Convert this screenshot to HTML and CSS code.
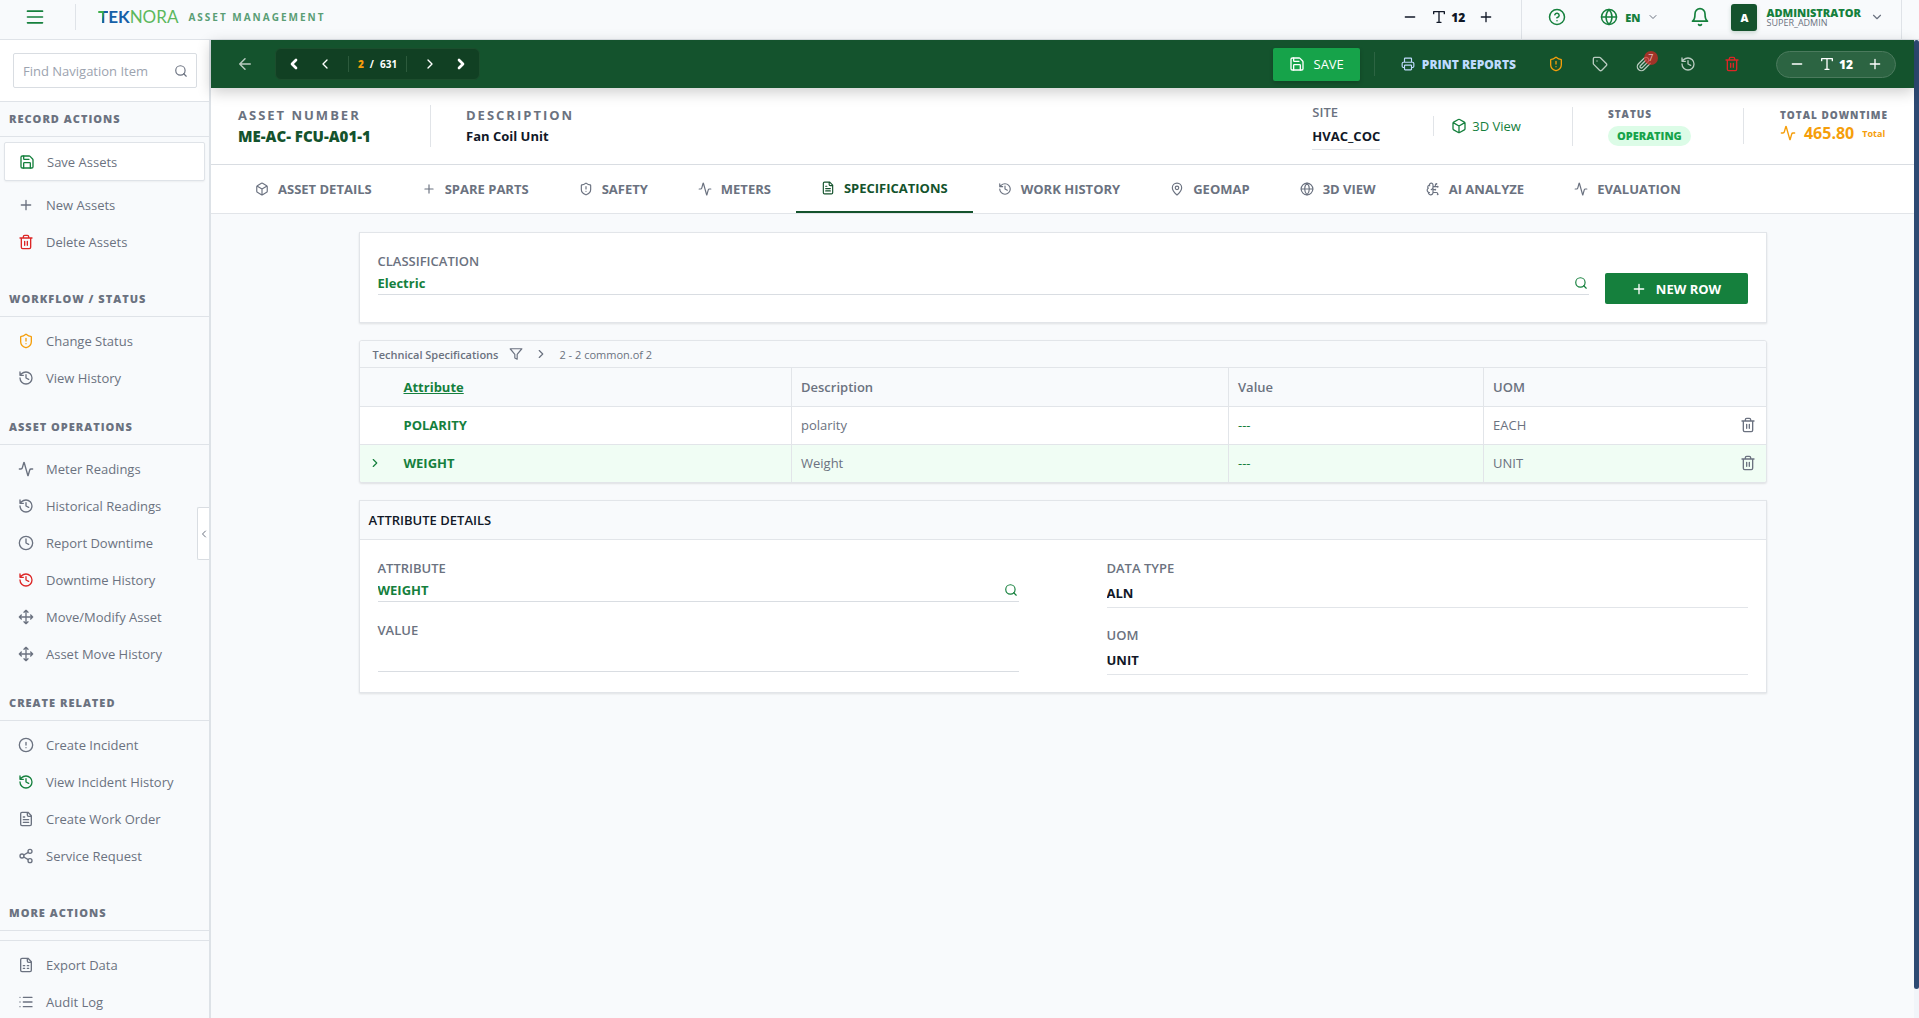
FILE: index.html
```
<!DOCTYPE html>
<html lang="en">
<head>
  <meta charset="UTF-8">
  <title>Teknora Asset Management</title>
  <link rel="stylesheet" href="styles.css">
</head>
<body>
  <!-- Icon sprite -->
  <svg class="sprite" aria-hidden="true">
    <symbol id="i-menu" viewBox="0 0 24 24"><path d="M3 5h18M3 12h18M3 19h18"/></symbol>
    <symbol id="i-minus" viewBox="0 0 24 24"><path d="M5 12h14"/></symbol>
    <symbol id="i-plus" viewBox="0 0 24 24"><path d="M5 12h14M12 5v14"/></symbol>
    <symbol id="i-type" viewBox="0 0 24 24"><path d="M4 7V4h16v3M9 20h6M12 4v16"/></symbol>
    <symbol id="i-help" viewBox="0 0 24 24"><circle cx="12" cy="12" r="10"/><path d="M9.1 9a3 3 0 0 1 5.8 1c0 2-3 3-3 3M12 17h.01"/></symbol>
    <symbol id="i-globe" viewBox="0 0 24 24"><circle cx="12" cy="12" r="10"/><path d="M12 2a14.5 14.5 0 0 0 0 20 14.5 14.5 0 0 0 0-20M2 12h20"/></symbol>
    <symbol id="i-bell" viewBox="0 0 24 24"><path d="M6 8a6 6 0 0 1 12 0c0 7 3 9 3 9H3s3-2 3-9M10.3 21a1.94 1.94 0 0 0 3.4 0"/></symbol>
    <symbol id="i-down" viewBox="0 0 24 24"><path d="m6 9 6 6 6-6"/></symbol>
    <symbol id="i-left" viewBox="0 0 24 24"><path d="m15 18-6-6 6-6"/></symbol>
    <symbol id="i-right" viewBox="0 0 24 24"><path d="m9 18 6-6-6-6"/></symbol>
    <symbol id="i-back" viewBox="0 0 24 24"><path d="m12 19-7-7 7-7M19 12H5"/></symbol>
    <symbol id="i-search" viewBox="0 0 24 24"><circle cx="11" cy="11" r="8"/><path d="m21 21-4.3-4.3"/></symbol>
    <symbol id="i-save" viewBox="0 0 24 24"><path d="M15.2 3a2 2 0 0 1 1.4.6l3.8 3.8a2 2 0 0 1 .6 1.4V19a2 2 0 0 1-2 2H5a2 2 0 0 1-2-2V5a2 2 0 0 1 2-2z"/><path d="M17 21v-7a1 1 0 0 0-1-1H8a1 1 0 0 0-1 1v7M7 3v4a1 1 0 0 0 1 1h7"/></symbol>
    <symbol id="i-trash" viewBox="0 0 24 24"><path d="M3 6h18M19 6v14a2 2 0 0 1-2 2H7a2 2 0 0 1-2-2V6M8 6V4a2 2 0 0 1 2-2h4a2 2 0 0 1 2 2v2M10 11v6M14 11v6"/></symbol>
    <symbol id="i-shield" viewBox="0 0 24 24"><path d="M20 13c0 5-3.5 7.5-7.66 8.95a1 1 0 0 1-.67-.01C7.5 20.5 4 18 4 13V6a1 1 0 0 1 1-1c2 0 4.5-1.2 6.24-2.72a1.17 1.17 0 0 1 1.52 0C14.51 3.81 17 5 19 5a1 1 0 0 1 1 1zM12 8v4M12 16h.01"/></symbol>
    <symbol id="i-history" viewBox="0 0 24 24"><path d="M3 12a9 9 0 1 0 9-9 9.75 9.75 0 0 0-6.74 2.74L3 8M3 3v5h5M12 7v5l4 2"/></symbol>
    <symbol id="i-activity" viewBox="0 0 24 24"><path d="M22 12h-2.48a2 2 0 0 0-1.93 1.46l-2.35 8.36a.25.25 0 0 1-.48 0L9.24 2.18a.25.25 0 0 0-.48 0l-2.35 8.36A2 2 0 0 1 4.49 12H2"/></symbol>
    <symbol id="i-clock" viewBox="0 0 24 24"><circle cx="12" cy="12" r="10"/><path d="M12 6v6l4 2"/></symbol>
    <symbol id="i-move" viewBox="0 0 24 24"><path d="M12 2v20M2 12h20M15 19l-3 3-3-3M19 9l3 3-3 3M5 9l-3 3 3 3M9 5l3-3 3 3"/></symbol>
    <symbol id="i-alert" viewBox="0 0 24 24"><circle cx="12" cy="12" r="10"/><path d="M12 8v4M12 16h.01"/></symbol>
    <symbol id="i-file" viewBox="0 0 24 24"><path d="M15 2H6a2 2 0 0 0-2 2v16a2 2 0 0 0 2 2h12a2 2 0 0 0 2-2V7zM14 2v4a2 2 0 0 0 2 2h4M10 9H8M16 13H8M16 17H8"/></symbol>
    <symbol id="i-sheet" viewBox="0 0 24 24"><path d="M15 2H6a2 2 0 0 0-2 2v16a2 2 0 0 0 2 2h12a2 2 0 0 0 2-2V7zM14 2v4a2 2 0 0 0 2 2h4M8 13h2M14 13h2M8 17h2M14 17h2"/></symbol>
    <symbol id="i-share" viewBox="0 0 24 24"><circle cx="18" cy="5" r="3"/><circle cx="6" cy="12" r="3"/><circle cx="18" cy="19" r="3"/><path d="m8.59 13.51 6.83 3.98M15.41 6.51l-6.82 3.98"/></symbol>
    <symbol id="i-list" viewBox="0 0 24 24"><path d="M3 5h.01M3 12h.01M3 19h.01M8 5h13M8 12h13M8 19h13"/></symbol>
    <symbol id="i-printer" viewBox="0 0 24 24"><path d="M6 18H4a2 2 0 0 1-2-2v-5a2 2 0 0 1 2-2h16a2 2 0 0 1 2 2v5a2 2 0 0 1-2 2h-2M6 9V3a1 1 0 0 1 1-1h10a1 1 0 0 1 1 1v6"/><rect x="6" y="14" width="12" height="8" rx="1"/></symbol>
    <symbol id="i-tag" viewBox="0 0 24 24"><path d="M12.59 2.59A2 2 0 0 0 11.17 2H4a2 2 0 0 0-2 2v7.17a2 2 0 0 0 .59 1.42l8.7 8.7a2.43 2.43 0 0 0 3.42 0l6.58-6.58a2.43 2.43 0 0 0 0-3.42zM7.5 7.5h.01"/></symbol>
    <symbol id="i-clip" viewBox="0 0 24 24"><path d="m21.44 11.05-9.19 9.19a6 6 0 0 1-8.49-8.49l8.57-8.57A4 4 0 1 1 18 8.84l-8.59 8.57a2 2 0 0 1-2.83-2.83l8.49-8.48"/></symbol>
    <symbol id="i-box" viewBox="0 0 24 24"><path d="M21 8a2 2 0 0 0-1-1.73l-7-4a2 2 0 0 0-2 0l-7 4A2 2 0 0 0 3 8v8a2 2 0 0 0 1 1.73l7 4a2 2 0 0 0 2 0l7-4A2 2 0 0 0 21 16zM3.3 7l8.7 5 8.7-5M12 22V12"/></symbol>
    <symbol id="i-pin" viewBox="0 0 24 24"><path d="M20 10c0 4.99-5.54 10.19-7.4 11.8a1 1 0 0 1-1.2 0C9.54 20.19 4 14.99 4 10a8 8 0 0 1 16 0"/><circle cx="12" cy="10" r="3"/></symbol>
    <symbol id="i-brain" viewBox="0 0 24 24"><path d="M12 5a3 3 0 1 0-5.997.125 4 4 0 0 0-2.526 5.77 4 4 0 0 0 .556 6.588A4 4 0 1 0 12 18zM9 13a4.5 4.5 0 0 0 3-4M6 5.13a3 3 0 0 0 .4 1.38M3.48 10.9a4 4 0 0 1 .58-.4M6 18a4 4 0 0 1-1.97-.52M12 13h4M12 18h6a2 2 0 0 1 2 2v1M12 8h8M16 8V5a2 2 0 0 1 2-2"/><circle cx="16" cy="13" r=".5"/><circle cx="18" cy="3" r=".5"/><circle cx="20" cy="21" r=".5"/><circle cx="20" cy="8" r=".5"/></symbol>
    <symbol id="i-filter" viewBox="0 0 24 24"><path d="M22 3H2l8 9.46V19l4 2v-8.54z"/></symbol>
  </svg>

  <header class="topbar">
    <button class="icon-btn menu-btn" aria-label="Menu"><svg class="icon"><use href="#i-menu"/></svg></button>
    <div class="brand">
      <span class="logo"><span class="logo-a"><span class="logo-leaf">T</span>EK</span><span class="logo-b">NORA</span></span>
      <span class="brand-sub">ASSET MANAGEMENT</span>
    </div>
    <div class="type-size">
      <button class="icon-btn" aria-label="Smaller text"><svg class="icon"><use href="#i-minus"/></svg></button>
      <span class="type-value"><svg class="icon"><use href="#i-type"/></svg>12</span>
      <button class="icon-btn" aria-label="Larger text"><svg class="icon"><use href="#i-plus"/></svg></button>
    </div>
    <div class="account">
      <button class="icon-btn" aria-label="Help"><svg class="icon lg"><use href="#i-help"/></svg></button>
      <button class="icon-btn lang"><svg class="icon lg"><use href="#i-globe"/></svg>EN<svg class="icon xs muted"><use href="#i-down"/></svg></button>
      <button class="icon-btn" aria-label="Notifications"><svg class="icon xl"><use href="#i-bell"/></svg></button>
      <button class="icon-btn user">
        <span class="avatar">A</span>
        <span class="user-text"><span class="user-name">ADMINISTRATOR</span><span class="user-role">SUPER_ADMIN</span></span>
        <svg class="icon sm muted"><use href="#i-down"/></svg>
      </button>
    </div>
  </header>

  <div class="shell">
    <aside class="sidebar">
      <div class="nav-search">
        <label class="search-box">
          <input type="text" placeholder="Find Navigation Item" aria-label="Find Navigation Item">
          <svg class="icon sm"><use href="#i-search"/></svg>
        </label>
      </div>
      <nav>
        <h2 class="nav-title">RECORD ACTIONS</h2>
        <div class="nav-group wide">
          <button class="nav-item active"><svg class="icon green"><use href="#i-save"/></svg>Save Assets</button>
          <button class="nav-item"><svg class="icon"><use href="#i-plus"/></svg>New Assets</button>
          <button class="nav-item"><svg class="icon red"><use href="#i-trash"/></svg>Delete Assets</button>
        </div>
        <h2 class="nav-title">WORKFLOW / STATUS</h2>
        <div class="nav-group">
          <button class="nav-item"><svg class="icon amber"><use href="#i-shield"/></svg>Change Status</button>
          <button class="nav-item"><svg class="icon"><use href="#i-history"/></svg>View History</button>
        </div>
        <h2 class="nav-title">ASSET OPERATIONS</h2>
        <div class="nav-group">
          <button class="nav-item"><svg class="icon"><use href="#i-activity"/></svg>Meter Readings</button>
          <button class="nav-item"><svg class="icon"><use href="#i-history"/></svg>Historical Readings</button>
          <button class="nav-item"><svg class="icon"><use href="#i-clock"/></svg>Report Downtime</button>
          <button class="nav-item"><svg class="icon red"><use href="#i-history"/></svg>Downtime History</button>
          <button class="nav-item"><svg class="icon"><use href="#i-move"/></svg>Move/Modify Asset</button>
          <button class="nav-item"><svg class="icon"><use href="#i-move"/></svg>Asset Move History</button>
        </div>
        <h2 class="nav-title">CREATE RELATED</h2>
        <div class="nav-group wide">
          <button class="nav-item"><svg class="icon"><use href="#i-alert"/></svg>Create Incident</button>
          <button class="nav-item"><svg class="icon green"><use href="#i-history"/></svg>View Incident History</button>
          <button class="nav-item"><svg class="icon"><use href="#i-file"/></svg>Create Work Order</button>
          <button class="nav-item"><svg class="icon"><use href="#i-share"/></svg>Service Request</button>
        </div>
        <h2 class="nav-title">MORE ACTIONS</h2>
        <div class="nav-group more">
          <button class="nav-item"><svg class="icon"><use href="#i-sheet"/></svg>Export Data</button>
          <button class="nav-item"><svg class="icon"><use href="#i-list"/></svg>Audit Log</button>
        </div>
      </nav>
      <button class="collapse-btn" aria-label="Collapse sidebar"><svg class="icon xs"><use href="#i-left"/></svg></button>
    </aside>

    <main class="main">
      <div class="toolbar">
        <button class="icon-btn soft" aria-label="Back"><svg class="icon lg"><use href="#i-back"/></svg></button>
        <div class="pager">
          <button class="icon-btn" aria-label="First"><svg class="icon bold"><use href="#i-left"/></svg></button>
          <button class="icon-btn" aria-label="Previous"><svg class="icon"><use href="#i-left"/></svg></button>
          <span class="pager-count"><b>2</b><span>/</span><span>631</span></span>
          <button class="icon-btn" aria-label="Next"><svg class="icon"><use href="#i-right"/></svg></button>
          <button class="icon-btn" aria-label="Last"><svg class="icon bold"><use href="#i-right"/></svg></button>
        </div>
        <button class="save-btn"><svg class="icon"><use href="#i-save"/></svg>SAVE</button>
        <button class="icon-btn print-btn"><svg class="icon sm"><use href="#i-printer"/></svg>PRINT REPORTS</button>
        <div class="tools">
          <button class="icon-btn amber" aria-label="Change status"><svg class="icon"><use href="#i-shield"/></svg></button>
          <button class="icon-btn soft" aria-label="Tag"><svg class="icon"><use href="#i-tag"/></svg></button>
          <button class="icon-btn soft attach" aria-label="Attachments"><svg class="icon"><use href="#i-clip"/></svg><span class="badge">7</span></button>
          <button class="icon-btn soft" aria-label="History"><svg class="icon"><use href="#i-history"/></svg></button>
          <button class="icon-btn red" aria-label="Delete"><svg class="icon"><use href="#i-trash"/></svg></button>
        </div>
        <div class="type-pill">
          <button class="icon-btn" aria-label="Smaller text"><svg class="icon"><use href="#i-minus"/></svg></button>
          <span class="type-value"><svg class="icon"><use href="#i-type"/></svg>12</span>
          <button class="icon-btn" aria-label="Larger text"><svg class="icon"><use href="#i-plus"/></svg></button>
        </div>
      </div>

      <section class="summary">
        <div class="sum-cell number"><span class="sum-label">ASSET NUMBER</span><span class="asset-no">ME-AC- FCU-A01-1</span></div>
        <div class="sum-cell desc"><span class="sum-label">DESCRIPTION</span><span class="asset-desc">Fan Coil Unit</span></div>
        <div class="sum-cell site"><span class="site-label">SITE</span><span class="site-value">HVAC_COC</span></div>
        <button class="icon-btn view3d"><svg class="icon"><use href="#i-box"/></svg>3D View</button>
        <div class="sum-cell status"><span class="tiny-label">STATUS</span><span class="status-pill">OPERATING</span></div>
        <div class="sum-cell downtime"><span class="tiny-label">TOTAL DOWNTIME</span>
          <span class="down-value"><svg class="icon"><use href="#i-activity"/></svg><b>465.80</b><small>Total</small></span></div>
      </section>

      <nav class="tabs">
        <a class="tab" href="#"><svg class="icon sm"><use href="#i-box"/></svg>ASSET DETAILS</a>
        <a class="tab" href="#"><svg class="icon sm"><use href="#i-plus"/></svg>SPARE PARTS</a>
        <a class="tab" href="#"><svg class="icon sm"><use href="#i-shield"/></svg>SAFETY</a>
        <a class="tab" href="#"><svg class="icon sm"><use href="#i-activity"/></svg>METERS</a>
        <a class="tab active" href="#"><svg class="icon sm"><use href="#i-file"/></svg>SPECIFICATIONS</a>
        <a class="tab" href="#"><svg class="icon sm"><use href="#i-history"/></svg>WORK HISTORY</a>
        <a class="tab" href="#"><svg class="icon sm"><use href="#i-pin"/></svg>GEOMAP</a>
        <a class="tab" href="#"><svg class="icon sm"><use href="#i-globe"/></svg>3D VIEW</a>
        <a class="tab" href="#"><svg class="icon sm"><use href="#i-brain"/></svg>AI ANALYZE</a>
        <a class="tab" href="#"><svg class="icon sm"><use href="#i-activity"/></svg>EVALUATION</a>
      </nav>

      <div class="content">
        <section class="card classification">
          <div class="field lookup">
            <label for="classification">CLASSIFICATION</label>
            <div class="input-row"><input id="classification" type="text" value="Electric"><svg class="icon sm"><use href="#i-search"/></svg></div>
          </div>
          <button class="new-row"><svg class="icon"><use href="#i-plus"/></svg>NEW ROW</button>
        </section>

        <section class="card specs">
          <div class="specs-bar">
            <h3>Technical Specifications</h3>
            <svg class="icon sm"><use href="#i-filter"/></svg>
            <svg class="icon sm"><use href="#i-right"/></svg>
            <span>2 - 2 common.of 2</span>
          </div>
          <table>
            <colgroup><col class="c-arrow"><col class="c-attr"><col class="c-desc"><col class="c-value"><col class="c-uom"><col class="c-del"></colgroup>
            <thead>
              <tr><th></th><th class="ruled"><a href="#">Attribute</a></th><th class="ruled">Description</th><th class="ruled">Value</th><th>UOM</th><th></th></tr>
            </thead>
            <tbody>
              <tr><td></td><td class="ruled key">POLARITY</td><td class="ruled">polarity</td><td class="ruled val">---</td><td>EACH</td><td class="del"><button class="icon-btn" aria-label="Delete POLARITY"><svg class="icon"><use href="#i-trash"/></svg></button></td></tr>
              <tr class="selected"><td class="arrow"><svg class="icon sm green"><use href="#i-right"/></svg></td><td class="ruled key">WEIGHT</td><td class="ruled">Weight</td><td class="ruled val">---</td><td>UNIT</td><td class="del"><button class="icon-btn" aria-label="Delete WEIGHT"><svg class="icon"><use href="#i-trash"/></svg></button></td></tr>
            </tbody>
          </table>
        </section>

        <section class="card details">
          <h3 class="details-title">ATTRIBUTE DETAILS</h3>
          <div class="details-grid">
            <div class="col">
              <div class="field lookup">
                <label for="attribute">ATTRIBUTE</label>
                <div class="input-row"><input id="attribute" type="text" value="WEIGHT"><svg class="icon sm"><use href="#i-search"/></svg></div>
              </div>
              <div class="field value">
                <label for="value">VALUE</label>
                <input id="value" type="text">
              </div>
            </div>
            <div class="col">
              <div class="field readonly"><label for="datatype">DATA TYPE</label><input id="datatype" type="text" value="ALN" readonly></div>
              <div class="field readonly"><label for="uom">UOM</label><input id="uom" type="text" value="UNIT" readonly></div>
            </div>
          </div>
        </section>
      </div>
    </main>
    <div class="scroll-track"><div class="scroll-thumb"></div></div>
  </div>
</body>
</html>
```
FILE: styles.css
```
* {
  box-sizing: border-box;
}
body {
  margin: 0;
  height: 100vh;
  display: flex;
  flex-direction: column;
  overflow: hidden;
  font-family: "Open Sans", "Noto Sans", sans-serif;
  font-size: 13px;
  color: #6b7280;
  background: #f8fafc;
}
button, input {
  font: inherit;
  color: inherit;
}
h2, h3 {
  margin: 0;
}
.sprite {
  display: none;
}
.icon {
  width: 16px;
  height: 16px;
  flex: none;
  fill: none;
  stroke: currentColor;
  stroke-width: 2;
  stroke-linecap: round;
  stroke-linejoin: round;
}
.icon.xs { width: 12px; height: 12px; }
.icon.sm { width: 14px; height: 14px; }
.icon.lg { width: 18px; height: 18px; }
.icon.xl { width: 20px; height: 20px; }
.icon.bold { stroke-width: 4; }
.green { color: #15803d; }
.red { color: #dc2626; }
.amber { color: #f59e0b; }
.icon.muted { color: #6b7280; }
.icon-btn {
  display: flex;
  align-items: center;
  padding: 0;
  border: none;
  background: none;
  cursor: pointer;
}

/* top bar */
.topbar {
  display: flex;
  align-items: center;
  height: 40px;
  flex: none;
  padding: 0 17px 5px 25px;
  border-bottom: 1px solid #dfe3e8;
}
.menu-btn {
  color: #15803d;
}
.menu-btn .icon {
  width: 20px;
  height: 20px;
}
.brand {
  display: flex;
  align-items: center;
  gap: 10px;
  height: 26px;
  margin-left: 30px;
  padding-left: 22px;
  border-left: 1px solid #dfe3e8;
}
.logo {
  font-family: "Lato", sans-serif;
  font-size: 17px;
  line-height: 20px;
}
.logo-a { color: #1560a8; font-weight: bold; }
.logo-leaf {
  background: linear-gradient(100deg, #3fae49 45%, #1560a8 55%);
  background-clip: text;
  color: transparent;
}
.logo-b { color: #5cb85c; }
.brand-sub {
  font-size: 10px;
  font-weight: 700;
  letter-spacing: 2px;
  color: #5a9e75;
}
.type-size {
  display: flex;
  gap: 13px;
  margin-left: auto;
  margin-right: 27px;
  color: #111827;
}
.type-value {
  display: flex;
  align-items: center;
  gap: 4px;
  font-size: 12px;
  font-weight: 800;
}
.account {
  display: flex;
  align-items: center;
  align-self: stretch;
  margin-bottom: -5px;
  padding: 0 17px 5px 26px;
  border-left: 1px solid #dfe3e8;
  border-right: 1px solid #dfe3e8;
  color: #15803d;
}
.lang {
  gap: 7px;
  margin: 0 31px 0 34px;
  font-size: 11px;
  font-weight: 800;
}
.user {
  gap: 9px;
  margin-left: 21px;
  text-align: left;
}
.avatar {
  width: 26px;
  height: 27px;
  border-radius: 3px;
  background: #14532d;
  color: #fff;
  font-size: 11px;
  font-weight: 800;
  line-height: 27px;
  text-align: center;
  box-shadow: 0 2px 4px #14532d33;
}
.user-text {
  display: flex;
  flex-direction: column;
}
.user-name { font-size: 11px; font-weight: 800; line-height: 11px; }
.user-role { font-size: 9px; font-weight: 500; line-height: 10px; color: #6b7280; }

.shell {
  display: flex;
  flex: 1;
  min-height: 0;
}

/* sidebar */
.sidebar {
  position: relative;
  width: 211px;
  flex: none;
  overflow: hidden;
  border-right: 2px solid #dde2e7;
}
.nav-search {
  padding: 13px 12px 13px 13px;
  background: #fff;
  border-bottom: 1px solid #dfe3e8;
}
.search-box {
  display: flex;
  align-items: center;
  height: 35px;
  padding: 0 8px 0 9px;
  border: 1px solid #d9dde2;
  border-radius: 2px;
}
.search-box input {
  width: 100%;
  min-width: 0;
  padding: 0;
  border: none;
  outline: none;
}
.search-box input::placeholder {
  color: #9ca3af;
}
.nav-title {
  height: 35px;
  padding: 0 9px;
  border-bottom: 1px solid #dfe3e8;
  font-size: 11px;
  font-weight: 800;
  line-height: 34px;
  letter-spacing: 1px;
}
.nav-group {
  padding: 5px 4px 14px;
}
.nav-group.wide {
  padding-bottom: 22px;
}
.nav-item {
  display: flex;
  align-items: center;
  gap: 12px;
  width: 100%;
  height: 37px;
  padding: 0 14px;
  border: none;
  background: none;
  font-weight: 500;
}
.nav-item.active {
  height: 39px;
  margin-bottom: 5px;
  border: 1px solid #dfe3e8;
  border-radius: 2px;
  background: #fff;
  box-shadow: 0 1px 2px #0000000d;
}
.nav-group.more {
  margin-top: 9px;
  border-top: 1px solid #dfe3e8;
}
.collapse-btn {
  position: absolute;
  right: 0;
  top: 467px;
  width: 12px;
  height: 53px;
  display: flex;
  align-items: center;
  justify-content: center;
  padding: 0;
  border: 1px solid #d9dde2;
  border-right: none;
  border-radius: 2px 0 0 2px;
  background: #fff;
}

/* record toolbar */
.main {
  flex: 1;
  min-width: 0;
  display: flex;
  flex-direction: column;
}
.toolbar {
  position: relative;
  display: flex;
  align-items: center;
  height: 48px;
  flex: none;
  padding: 0 18px 0 25px;
  background: #14532d;
  color: #fff;
  box-shadow: 0 4px 14px #00000033;
}
.soft { color: #b9cbc0; }
.toolbar .red { color: #dc2626; }
.pager {
  display: flex;
  align-items: center;
  gap: 15px;
  height: 32px;
  margin-left: 21px;
  padding: 0 10px;
  border: 1px solid #1c4d2d;
  border-radius: 6px;
  background: #114023;
}
.pager-count {
  display: flex;
  gap: 6px;
  padding: 0 9px;
  border: solid #2c5a3c;
  border-width: 0 1px;
  font-size: 10px;
  font-weight: 700;
  line-height: 16px;
}
.pager-count b { color: #f59e0b; }
.save-btn {
  display: flex;
  align-items: center;
  gap: 9px;
  height: 33px;
  margin-left: auto;
  padding: 0 16px;
  border: none;
  border-radius: 2px;
  background: #16a34a;
  box-shadow: 0 2px 4px #00000033;
}
.print-btn {
  gap: 7px;
  height: 24px;
  margin-left: 14px;
  padding-left: 26px;
  border-left: 1px solid #2c6442;
  color: #bfdbfe;
  font-size: 12px;
  font-weight: 800;
}
.tools {
  display: flex;
  gap: 28px;
  margin: 0 36px 0 32px;
}
.attach {
  position: relative;
}
.badge {
  position: absolute;
  top: -5px;
  right: -6px;
  width: 14px;
  height: 14px;
  border-radius: 50%;
  background: #dc2626b3;
  font-size: 9px;
  line-height: 14px;
  color: #e7c4c0;
}
.type-pill {
  display: flex;
  align-items: center;
  gap: 14px;
  height: 27px;
  padding: 0 12px;
  border: 1px solid #4b7a5d;
  border-radius: 14px;
  background: #2c6442;
}

/* asset summary */
.summary {
  display: flex;
  align-items: center;
  height: 77px;
  flex: none;
  padding: 0 26px 0 27px;
  background: #fff;
  border-bottom: 1px solid #d9dde2;
  box-shadow: 0 1px 3px #0000001a;
}
.sum-cell {
  display: flex;
  flex-direction: column;
  white-space: nowrap;
}
.sum-label {
  font-size: 13px;
  font-weight: 700;
  line-height: 20px;
  letter-spacing: 2px;
}
.asset-no {
  font-size: 15px;
  font-weight: 800;
  line-height: 22px;
  color: #14532d;
}
.asset-desc {
  font-weight: 700;
  line-height: 22px;
  color: #111827;
}
.number { width: 192px; }
.desc {
  padding-left: 35px;
  border-left: 1px solid #e1e4e8;
}
.site {
  margin-left: auto;
}
.site-label {
  font-weight: 600;
  line-height: 20px;
}
.site-value {
  padding: 5px 0 4px;
  border-bottom: 1px solid #e1e4e8;
  font-weight: 700;
  line-height: 18px;
  color: #111827;
}
.view3d {
  gap: 5px;
  height: 20px;
  margin-left: 53px;
  padding: 0 51px 0 17px;
  border-left: 1px solid #e1e4e8;
  color: #15803d;
}
.tiny-label {
  font-size: 10px;
  font-weight: 800;
  line-height: 14px;
  letter-spacing: 1px;
}
.status {
  width: 171px;
  gap: 5px;
  align-items: flex-start;
  padding-left: 35px;
  border-left: 1px solid #e1e4e8;
}
.status-pill {
  padding: 0 9px;
  border-radius: 10px;
  background: #dcfce7;
  font-size: 11px;
  font-weight: 800;
  line-height: 20px;
  color: #16a34a;
}
.downtime {
  padding-left: 36px;
  border-left: 1px solid #e1e4e8;
}
.down-value {
  display: flex;
  align-items: center;
  gap: 8px;
  color: #f59e0b;
}
.down-value b { font-size: 16px; line-height: 22px; }
.down-value small { font-size: 9px; font-weight: 700; }

/* tabs */
.tabs {
  display: flex;
  height: 49px;
  flex: none;
  padding: 0 19px;
  background: #fff;
  border-bottom: 1px solid #e2e5e9;
}
.tab {
  display: flex;
  align-items: center;
  gap: 9px;
  padding: 0 25px;
  color: #6b7280;
  font-size: 13px;
  font-weight: 700;
  text-decoration: none;
  white-space: nowrap;
}
.tab.active {
  border-bottom: 2px solid #14532d;
  color: #14532d;
}

/* content */
.content {
  display: flex;
  flex-direction: column;
  gap: 17px;
  width: 100%;
  max-width: 1408px;
  margin: 18px auto 0;
}
.card {
  background: #fff;
  border: 1px solid #e2e5e9;
  box-shadow: 0 1px 2px #0000001a;
}
.classification {
  display: flex;
  align-items: flex-start;
  gap: 16px;
  padding: 17px 18px 18px;
}
.classification .field {
  flex: 1;
}
.field {
  display: flex;
  flex-direction: column;
}
.field label {
  font-weight: 600;
  line-height: 22px;
}
.field input {
  width: 100%;
  padding: 0;
  border: none;
  outline: none;
  background: none;
  color: #111827;
  font-weight: 700;
}
.input-row {
  display: flex;
  align-items: center;
  height: 23px;
  padding-right: 1px;
  border-bottom: 1px solid #d9dde2;
  color: #15803d;
}
.field .input-row input {
  color: #15803d;
}
.new-row {
  display: flex;
  align-items: center;
  justify-content: center;
  gap: 9px;
  width: 143px;
  height: 31px;
  margin-top: 23px;
  border: none;
  border-radius: 2px;
  background: #15803d;
  color: #fff;
  font-weight: 700;
}
.specs {
  border-radius: 3px;
  overflow: hidden;
}
.specs-bar {
  display: flex;
  align-items: center;
  gap: 11px;
  height: 27px;
  padding: 0 13px;
  background: #f8fafc;
  border-bottom: 1px solid #e2e5e9;
  font-size: 11px;
}
.specs-bar h3 { font-size: 11px; font-weight: 600; }
table {
  width: 100%;
  table-layout: fixed;
  border-collapse: collapse;
}
.c-arrow { width: 35px; }
.c-attr { width: 397px; }
.c-desc { width: 437px; }
.c-value { width: 255px; }
.c-del { width: 40px; }
th, td {
  height: 38px;
  padding: 0 9px;
  text-align: left;
}
tr { border-bottom: 1px solid #e2e5e9; }
tbody tr:last-child { border-bottom: none; }
th {
  font-weight: 600;
  background: #f8fafc;
}
th a { color: #15803d; font-weight: 700; }
.ruled { border-right: 1px solid #e2e5e9; }
.key { color: #15803d; font-weight: 700; }
.val { color: #15803d; }
.selected td { background: #f0fdf4; }
.arrow { padding: 0 8px; }
.arrow .icon { display: block; }
.del { padding: 0 10px 0 14px; }
.details-title {
  padding: 0 9px;
  background: #f8fafc;
  border-bottom: 1px solid #e2e5e9;
  font-size: 13px;
  font-weight: 600;
  line-height: 38px;
  color: #111827;
}
.details-grid {
  display: grid;
  grid-template-columns: 1fr 1fr;
  gap: 88px;
  padding: 17px 18px;
}
.col {
  display: flex;
  flex-direction: column;
}
.field.value { margin-top: 17px; }
.field.value input {
  height: 31px;
  border-bottom: 1px solid #d9dde2;
}
.field.readonly input {
  height: 29px;
  border-bottom: 1px solid #e2e5e9;
}
.field.readonly + .readonly { margin-top: 16px; }

.scroll-track {
  width: 5px;
  flex: none;
  background: #f1f5f9;
}
.scroll-thumb {
  height: 97%;
  border-radius: 3px;
  background: #2d4a73;
}
```
